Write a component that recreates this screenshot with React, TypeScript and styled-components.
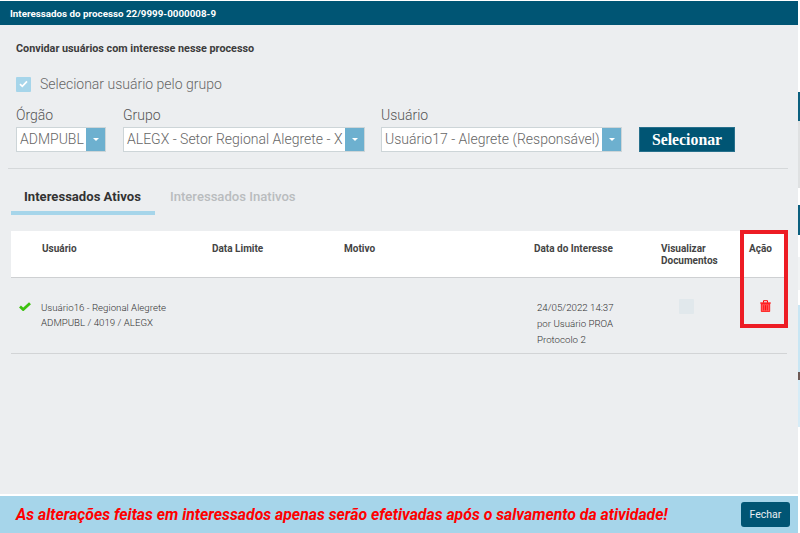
import React from "react";
import styled, { createGlobalStyle } from "styled-components";

const Global = createGlobalStyle`
  html, body { margin: 0; padding: 0; background: #fff; }
  body { font-family: Roboto, "Liberation Sans", sans-serif; }
  * { box-sizing: border-box; }
`;

const Page = styled.div`
  width: 800px; height: 533px; display: flex; overflow: hidden; position: relative; background: #fff;
`;
const Dialog = styled.div`
  width: 798px; height: 533px; padding-top: 1px; display: flex; flex-direction: column; position: relative;
`;
const Strip = styled.div`
  width: 2px; height: 533px; display: flex; flex-direction: column;
`;
const StripPart = styled.div<{ $h: number; $c: string }>`
  height: ${p => p.$h}px; background: ${p => p.$c};
`;
const Header = styled.div`
  height: 24px; background: #005574; color: #fff; font-size: 9.8px; font-weight: 700;
  display: flex; align-items: center; padding-left: 10px; flex: none;
`;
const Body = styled.div`
  flex: 1; background: #eceef0; display: flex; flex-direction: column; min-height: 0;
`;
const Invite = styled.div`
  padding: 18px 0 0 16px; font-size: 10.8px; font-weight: 700; color: #3c3c3c; line-height: 11px; height: 46px;
`;
const CheckRow = styled.div`
  display: flex; align-items: center; gap: 9px; padding-left: 16px; height: 16px; margin-top: 5px;
  font-size: 14px; color: #666; font-weight: 300;
`;
const CheckBox = styled.span`
  width: 15px; height: 15px; background: #a6d5ea; border-radius: 1px; display: flex; align-items: center; justify-content: center;
`;
const Fields = styled.div`
  display: flex; align-items: flex-end; padding: 15px 0 16px 16px; height: 76px; flex: none;
`;
const Field = styled.div<{ $w: number; $mr: number }>`
  width: ${p => p.$w}px; margin-right: ${p => p.$mr}px; display: flex; flex-direction: column;
`;
const FieldLabel = styled.label`
  font-size: 14px; font-weight: 300; color: #555; line-height: 16px; margin-bottom: 4px;
`;
const Select = styled.div`
  height: 25px; display: flex; background: #fff; border: 1px solid #cdd5d8;
`;
const SelectText = styled.span`
  flex: 1; min-width: 0; font-size: 14px; font-weight: 300; color: #666; line-height: 23px; padding-left: 3px; white-space: nowrap; overflow: hidden;
`;
const SelectArrow = styled.span`
  width: 19px; background: #6db0cf; flex: none; display: flex; align-items: center; justify-content: center;
`;
const Caret = styled.i`
  width: 0; height: 0; border-left: 3px solid transparent; border-right: 3px solid transparent; border-top: 3px solid #fff;
`;
const SelectButton = styled.button`
  width: 96px; height: 25px; background: #005574; color: #fff; border: 1px solid #27708c; padding: 0;
  font-family: "Liberation Serif", serif; font-weight: 700; font-size: 15.8px;
`;
const Rule = styled.div`
  height: 1px; background: #d5d8da; margin: 0 10px 0 8px; flex: none;
`;
const Tabs = styled.div`
  display: flex; height: 46px; padding-left: 11px; flex: none;
`;
const Tab = styled.div<{ $active?: boolean }>`
  width: 144px; padding-left: ${p => (p.$active ? 13 : 15)}px; padding-top: 20px; font-size: 13.1px; line-height: 15px; white-space: nowrap;
  font-weight: ${p => (p.$active ? 700 : 500)};
  color: ${p => (p.$active ? "#333" : "#b9bcbe")};
  border-bottom: ${p => (p.$active ? "4px solid #a6d5ea" : "none")};
`;
const Table = styled.div`
  margin: 16px 11px 0 11px; display: flex; flex-direction: column;
`;
const grid = `display: grid; grid-template-columns: 30px 171px 132px 190px 127px 88px 38px;`;
const HeadRow = styled.div`
  ${grid} height: 47px; background: #fff; border-bottom: 1px solid #ced0d2; padding-top: 11px;
  font-size: 10px; font-weight: 700; color: #444; line-height: 12px;
`;
const HeadCell = styled.div<{ $pl?: number }>`
  padding-left: ${p => p.$pl ?? 0}px; padding-top: 1px;
`;
const DataRow = styled.div`
  ${grid} height: 76px; border-bottom: 1px solid #d2d4d6; padding-top: 22px;
  font-size: 9.7px; font-weight: 300; color: #333; line-height: 15px;
`;
const CheckCell = styled.div`
  padding: 0 0 0 8px;
`;
const UserCell = styled.div``;
const DateCell = styled.div`
  padding-left: 3px; line-height: 16px;
`;
const ViewCell = styled.div`
  padding: 0 0 0 18px; margin-top: -1px;
`;
const ViewBox = styled.div`
  width: 15px; height: 15px; background: #e1e8ec; border-radius: 1px;
`;
const ActionCell = styled.div`
  padding: 0 0 0 11px; color: #f00;
`;
const Highlight = styled.div`
  position: absolute; left: 740px; top: 230px; width: 48px; height: 98px; border: 4px solid #ed1c24; pointer-events: none;
`;
const Footer = styled.div`
  height: 37px; flex: none; background: #a6d5ea; display: flex; align-items: center; justify-content: space-between;
  padding: 0 8px 0 16px;
`;
const Warning = styled.div`
  color: #f00; font-size: 15.8px; font-weight: 700; font-style: italic;
`;
const Close = styled.button`
  width: 49px; height: 25px; background: #005574; color: #e8eef2; border: none; border-radius: 3px; font-family: Roboto, sans-serif; font-size: 10.5px; padding: 0;
`;
const FooterGap = styled.div`
  height: 2px; background: #fff; flex: none;
`;
const Main = styled.div`
  flex: 1; min-height: 0; background: #eceef0;
`;

const Trash = () => (
  <svg width="11" height="12" viewBox="0 0 11 12" fill="none">
    <path d="M.3 2.4h10.4v1.3H.3z" fill="#f00" />
    <path d="M3.5 2.6V.7h4v1.9" stroke="#f00" strokeWidth="1" />
    <path d="M1.3 3.8h8.4v7.4a.7.7 0 0 1-.7.7H2a.7.7 0 0 1-.7-.7z" fill="#ff5a5a" stroke="#f00" strokeWidth=".8" />
    <path d="M3.7 5.2v5.2M5.5 5.2v5.2M7.3 5.2v5.2" stroke="#f00" strokeWidth=".8" />
  </svg>
);

const strip: [number, string][] = [
  [92, "#fff"], [29, "#0b5f7e"], [67, "#dfe1e2"], [17, "#fff"], [30, "#0b5f7e"], [22, "#fff"], [33, "#f2f4f5"],
  [15, "#fff"], [67, "#c9e6f4"], [8, "#6d5a55"], [47, "#d6ecf7"], [106, "#fff"],
];

export default function App() {
  return (
    <Page>
      <Global />
      <Dialog>
        <Header>Interessados do processo 22/9999-0000008-9</Header>
        <Body>
          <Invite>Convidar usuários com interesse nesse processo</Invite>
          <CheckRow>
            <CheckBox>
              <svg width="9" height="8" viewBox="0 0 9 8"><path d="M1 4.2l2.3 2.2L8 1.4" stroke="#fff" strokeWidth="1.7" fill="none" /></svg>
            </CheckBox>
            Selecionar usuário pelo grupo
          </CheckRow>
          <Fields>
            <Field $w={90} $mr={17}>
              <FieldLabel>Órgão</FieldLabel>
              <Select><SelectText>ADMPUBL</SelectText><SelectArrow><Caret /></SelectArrow></Select>
            </Field>
            <Field $w={242} $mr={16}>
              <FieldLabel>Grupo</FieldLabel>
              <Select><SelectText>ALEGX - Setor Regional Alegrete - X</SelectText><SelectArrow><Caret /></SelectArrow></Select>
            </Field>
            <Field $w={241} $mr={17}>
              <FieldLabel>Usuário</FieldLabel>
              <Select><SelectText>Usuário17 - Alegrete (Responsável)</SelectText><SelectArrow><Caret /></SelectArrow></Select>
            </Field>
            <SelectButton>Selecionar</SelectButton>
          </Fields>
          <Rule />
          <Tabs>
            <Tab $active>Interessados Ativos</Tab>
            <Tab>Interessados Inativos</Tab>
          </Tabs>
          <Table>
            <HeadRow>
              <HeadCell />
              <HeadCell $pl={1}>Usuário</HeadCell>
              <HeadCell>Data Limite</HeadCell>
              <HeadCell>Motivo</HeadCell>
              <HeadCell>Data do Interesse</HeadCell>
              <HeadCell>Visualizar<br />Documentos</HeadCell>
              <HeadCell>Ação</HeadCell>
            </HeadRow>
            <DataRow>
              <CheckCell>
                <svg width="12" height="9" viewBox="0 0 12 9"><path d="M1 4.5l3.2 3L11 1.2" stroke="#3cc10f" strokeWidth="2.8" fill="none" /></svg>
              </CheckCell>
              <UserCell>Usuário16 - Regional Alegrete<br />ADMPUBL / 4019 / ALEGX</UserCell>
              <div />
              <div />
              <DateCell>24/05/2022 14:37<br />por Usuário PROA<br />Protocolo 2</DateCell>
              <ViewCell><ViewBox /></ViewCell>
              <ActionCell><Trash /></ActionCell>
            </DataRow>
          </Table>
          <Main />
        </Body>
        <FooterGap />
        <Footer>
          <Warning>As alterações feitas em interessados apenas serão efetivadas após o salvamento da atividade!</Warning>
          <Close>Fechar</Close>
        </Footer>
      </Dialog>
      <Strip>
        {strip.map(([h, c], i) => <StripPart key={i} $h={h} $c={c} />)}
      </Strip>
      <Highlight />
    </Page>
  );
}
